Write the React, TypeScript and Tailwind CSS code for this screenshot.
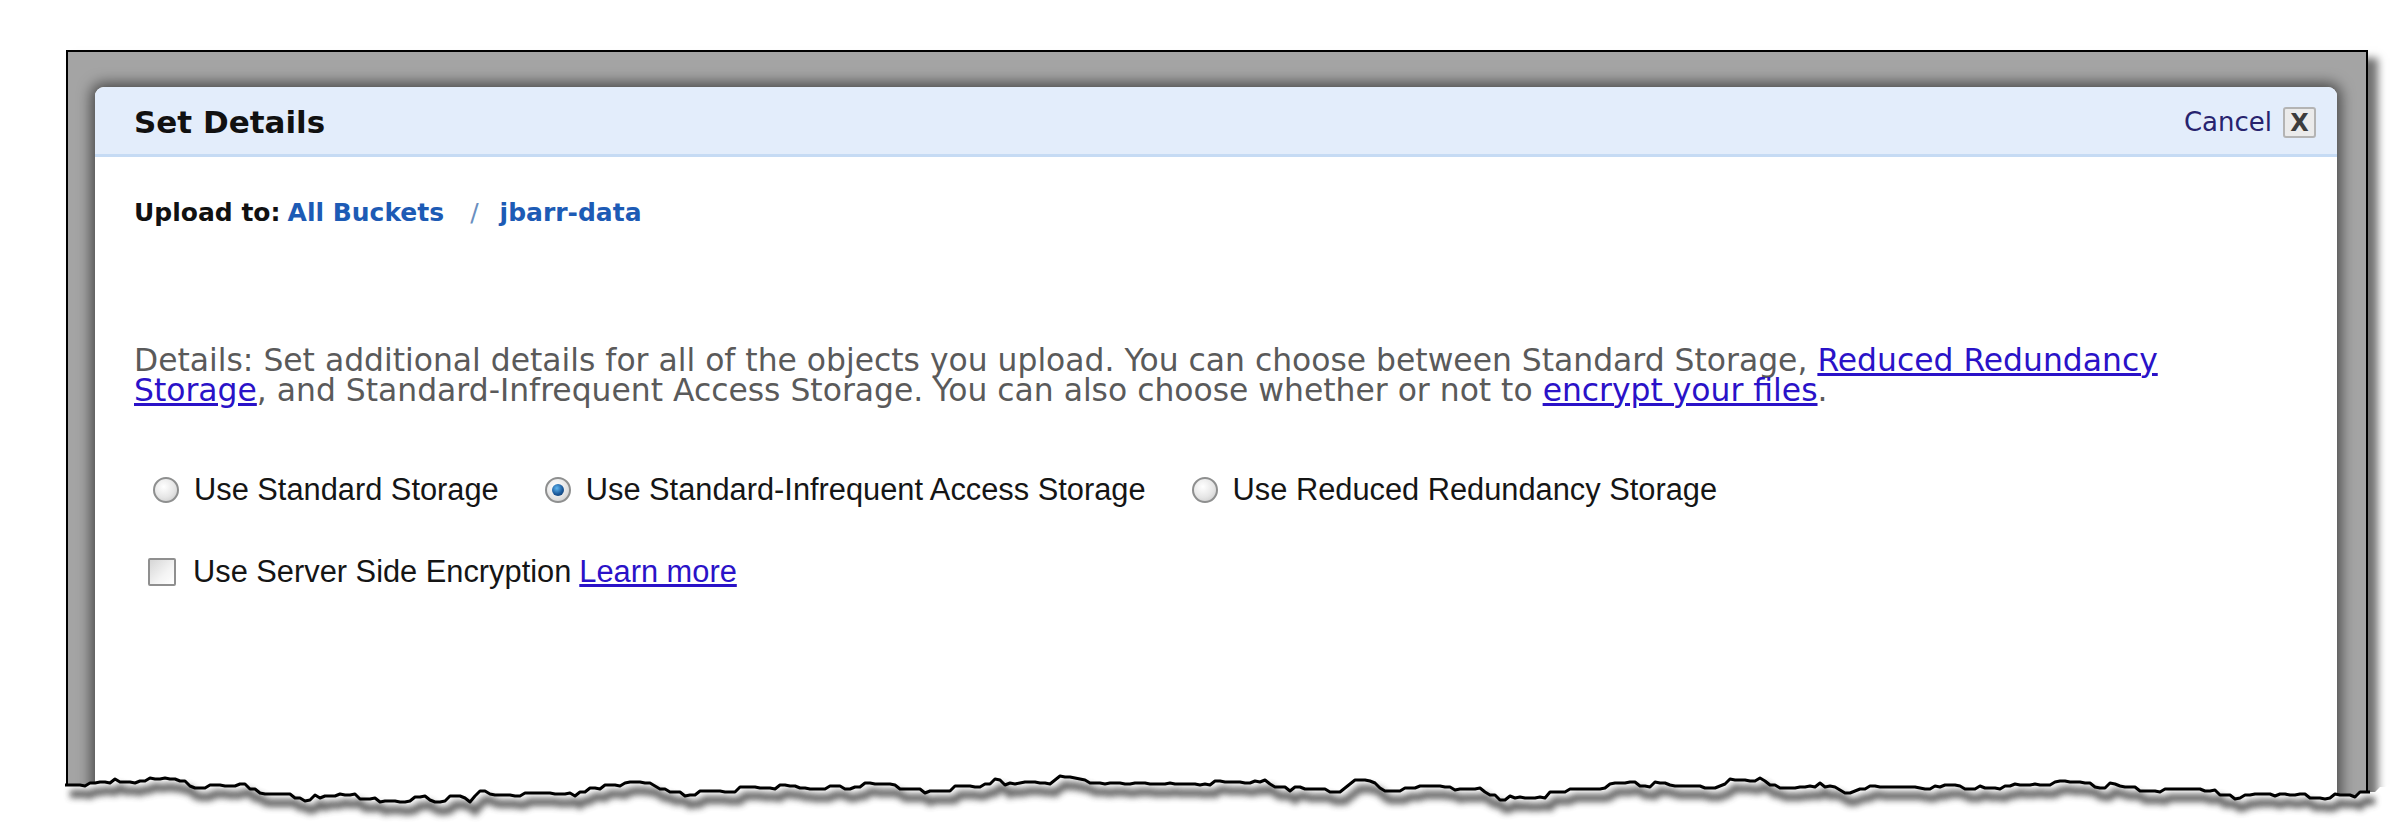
import React from 'react';

const tornLine = (() => {
  let seed = 11;
  const rnd = () => {
    seed = (seed * 16807) % 2147483647;
    return seed / 2147483647;
  };
  const pts: [number, number][] = [];
  let y = 50;
  for (let x = 60; x <= 2392; x += 5) {
    const r = rnd();
    if (r < 0.45) y += (rnd() - 0.5) * 11;
    y += (50 - y) * 0.04;
    y = Math.max(36, Math.min(62, y));
    pts.push([x, Math.round(y)]);
  }
  return pts;
})();

const TornEdge: React.FC = () => {
  const line = tornLine.map(([x, y]) => `${x},${y}`).join(' ');
  const frameLine = tornLine
    .filter(([x]) => x >= 64 && x <= 2370)
    .map(([x, y]) => `${x},${y}`)
    .join(' ');
  return (
    <svg className="absolute left-0 top-[740px]" width="2392" height="90" viewBox="0 0 2392 90">
      <defs>
        <filter id="tornShadow" x="-5%" y="-100%" width="110%" height="300%">
          <feGaussianBlur stdDeviation="3" />
        </filter>
      </defs>
      <polygon points={`0,${tornLine[0][1]} ${line} 2392,90 0,90`} fill="#ffffff" />
      <polyline
        points={frameLine}
        fill="none"
        stroke="#4a4a4a"
        strokeWidth="8"
        opacity="0.85"
        filter="url(#tornShadow)"
        transform="translate(5 9)"
      />
      <polyline points={frameLine} fill="none" stroke="#000000" strokeWidth="3" strokeLinejoin="round" />
    </svg>
  );
};

const Radio: React.FC<{ checked?: boolean }> = ({ checked }) => (
  <span className="flex h-[26px] w-[26px] shrink-0 items-center justify-center rounded-full border-[2px] border-[#8e8f8f] bg-[radial-gradient(circle_at_40%_35%,#ffffff_0%,#e6e6e6_55%,#c4c4c4_100%)]">
    {checked && (
      <span className="h-[12px] w-[12px] rounded-full bg-[radial-gradient(circle_at_40%_35%,#5fb6f0_0%,#1c5a9c_55%,#0c2f5c_100%)]" />
    )}
  </span>
);

const App: React.FC = () => {
  return (
    <div className="relative h-[830px] w-[2392px] overflow-hidden bg-white">
      <div className="pl-[66px] pt-[50px]">
        <div className="h-[780px] w-[2302px] border-2 border-black bg-[#a4a4a4] pl-[27px] pr-[29px] pt-[35px] shadow-[10px_8px_8px_rgba(0,0,0,0.55)]">
          <div className="h-full rounded-t-[9px] bg-white shadow-[0_0_14px_4px_rgba(0,0,0,0.55)]">
            <div className="flex h-[70px] items-center justify-between rounded-t-[9px] border-b-[3px] border-[#c6dbf4] bg-[#e3edfb] pl-[39px] pr-[21px] pt-[4px]">
              <h1 className="font-['DejaVu_Sans',sans-serif] text-[31px] font-bold text-[#111111]">Set Details</h1>
              <div className="flex items-center gap-[11px]">
                <span className="font-['DejaVu_Sans',sans-serif] text-[26px] text-[#27236e]">Cancel</span>
                <span className="flex h-[31px] w-[33px] items-center justify-center rounded-[3px] border-2 border-[#b4b4b4] bg-[#ebebeb] font-['DejaVu_Sans',sans-serif] text-[24px] leading-none font-bold text-[#3c3c3c]">
                  X
                </span>
              </div>
            </div>

            <div className="pl-[39px] pt-[37px]">
              <div className="flex items-center font-['DejaVu_Sans',sans-serif] text-[25px] font-bold">
                <span className="text-[#111111]">Upload to:</span>
                <span className="ml-[7px] text-[#1d5bb5]">All Buckets</span>
                <span className="ml-[26px] font-normal text-[#6a8fc0]">/</span>
                <span className="ml-[21px] text-[#1d5bb5]">jbarr-data</span>
              </div>

              <p className="mt-[113px] font-['DejaVu_Sans',sans-serif] text-[31.4px] leading-[30px] text-[#5a5a5a]">
                Details: Set additional details for all of the objects you upload. You can choose between Standard Storage,{' '}
                <a className="text-[#2a12c8] underline">
                  Reduced Redundancy
                  <br />
                  Storage
                </a>
                , and Standard-Infrequent Access Storage. You can also choose whether or not to{' '}
                <a className="text-[#2a12c8] underline">encrypt your files</a>.
              </p>

              <div className="mt-[62px] flex items-center pl-[19px] font-['Liberation_Sans',Arial,sans-serif] text-[30.8px] text-[#151515]">
                <Radio />
                <span className="ml-[15px]">Use Standard Storage</span>
                <span className="ml-[46px]">
                  <Radio checked />
                </span>
                <span className="ml-[15px]">Use Standard-Infrequent Access Storage</span>
                <span className="ml-[46px]">
                  <Radio />
                </span>
                <span className="ml-[15px]">Use Reduced Redundancy Storage</span>
              </div>

              <div className="mt-[36px] flex items-center pl-[14px] font-['Liberation_Sans',Arial,sans-serif] text-[30.8px] text-[#151515]">
                <span className="h-[28px] w-[28px] shrink-0 rounded-[2px] border-2 border-[#8f8f8f] bg-[linear-gradient(135deg,#d6d6d6_0%,#f4f4f4_60%,#ffffff_100%)]" />
                <span className="ml-[17px]">Use Server Side Encryption</span>
                <a className="ml-[8px] text-[#2a12c8] underline">Learn more</a>
              </div>
            </div>
          </div>
        </div>
      </div>
      <TornEdge />
    </div>
  );
};

export default App;
